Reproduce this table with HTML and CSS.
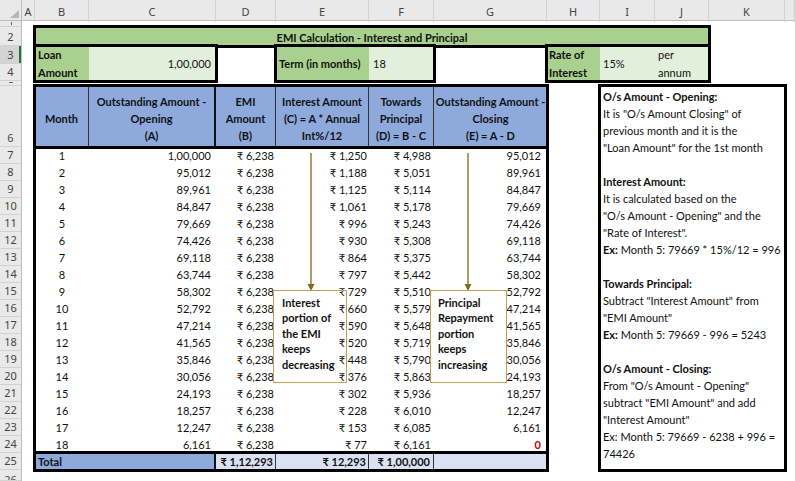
FILE: index.html
```html
<!DOCTYPE html>
<html lang="en">
<head>
<meta charset="utf-8">
<title>EMI Calculation - Interest and Principal</title>
<link rel="stylesheet" href="styles.css">
</head>
<body>
<div class="app">
  <div class="colhdr">
    <div class="corner">
      <svg class="corner-tri" width="22" height="21" viewBox="0 0 22 21"><polygon points="19,10 19,18 10,18" fill="#b5b5b5"/></svg>
    </div>
    <div class="ch">A</div>
    <div class="ch">B</div>
    <div class="ch">C</div>
    <div class="ch">D</div>
    <div class="ch">E</div>
    <div class="ch">F</div>
    <div class="ch">G</div>
    <div class="ch">H</div>
    <div class="ch">I</div>
    <div class="ch">J</div>
    <div class="ch">K</div>
    <div class="ch"></div>
  </div>

  <div class="main">
    <div class="rowhdr">
      <div class="rh rh-hidden"><i class="tick tick-v"></i></div>
      <div class="rh"><span>2</span></div>
      <div class="rh rh-sel"><span>3</span></div>
      <div class="rh"><span>4</span></div>
      <div class="rh rh-hidden"><i class="tick tick-h"></i></div>
      <div class="rh"><span>6</span></div>
      <div class="rh"><span>7</span></div>
      <div class="rh"><span>8</span></div>
      <div class="rh"><span>9</span></div>
      <div class="rh"><span>10</span></div>
      <div class="rh"><span>11</span></div>
      <div class="rh"><span>12</span></div>
      <div class="rh"><span>13</span></div>
      <div class="rh"><span>14</span></div>
      <div class="rh"><span>15</span></div>
      <div class="rh"><span>16</span></div>
      <div class="rh"><span>17</span></div>
      <div class="rh"><span>18</span></div>
      <div class="rh"><span>19</span></div>
      <div class="rh"><span>20</span></div>
      <div class="rh"><span>21</span></div>
      <div class="rh"><span>22</span></div>
      <div class="rh"><span>23</span></div>
      <div class="rh"><span>24</span></div>
      <div class="rh"><span>25</span></div>
      <div class="rh rh-top"><span>26</span></div>
    </div>

    <div class="canvas">
      <div class="title">EMI Calculation - Interest and Principal</div>

      <div class="box box-loan">
        <div class="lbl lbl-loan">Loan<br>Amount</div>
        <div class="val val-loan">1,00,000</div>
      </div>

      <div class="box box-term">
        <div class="lbl lbl-term">Term (in months)</div>
        <div class="val val-term">18</div>
      </div>

      <div class="box box-rate">
        <div class="lbl lbl-rate">Rate of<br>Interest</div>
        <div class="val val-rate">15%</div>
        <div class="val val-per">per<br>annum</div>
      </div>

      <div class="tbl">
        <div class="thead">
          <div class="th"><span>Month</span></div>
          <div class="th th-thick"><span>Outstanding Amount -<br>Opening<br>(A)</span></div>
          <div class="th"><span>EMI<br>Amount<br>(B)</span></div>
          <div class="th"><span>Interest Amount<br>(C) = A * Annual<br>Int%/12</span></div>
          <div class="th"><span>Towards<br>Principal<br>(D) = B - C</span></div>
          <div class="th th-last"><span>Outstanding Amount -<br>Closing<br>(E) = A - D</span></div>
        </div>

        <div class="tr"><div>1</div><div>1,00,000</div><div>₹ 6,238</div><div>₹ 1,250</div><div>₹ 4,988</div><div>95,012</div></div>
        <div class="tr"><div>2</div><div>95,012</div><div>₹ 6,238</div><div>₹ 1,188</div><div>₹ 5,051</div><div>89,961</div></div>
        <div class="tr"><div>3</div><div>89,961</div><div>₹ 6,238</div><div>₹ 1,125</div><div>₹ 5,114</div><div>84,847</div></div>
        <div class="tr"><div>4</div><div>84,847</div><div>₹ 6,238</div><div>₹ 1,061</div><div>₹ 5,178</div><div>79,669</div></div>
        <div class="tr"><div>5</div><div>79,669</div><div>₹ 6,238</div><div>₹ 996</div><div>₹ 5,243</div><div>74,426</div></div>
        <div class="tr"><div>6</div><div>74,426</div><div>₹ 6,238</div><div>₹ 930</div><div>₹ 5,308</div><div>69,118</div></div>
        <div class="tr"><div>7</div><div>69,118</div><div>₹ 6,238</div><div>₹ 864</div><div>₹ 5,375</div><div>63,744</div></div>
        <div class="tr"><div>8</div><div>63,744</div><div>₹ 6,238</div><div>₹ 797</div><div>₹ 5,442</div><div>58,302</div></div>
        <div class="tr"><div>9</div><div>58,302</div><div>₹ 6,238</div><div>₹ 729</div><div>₹ 5,510</div><div>52,792</div></div>
        <div class="tr"><div>10</div><div>52,792</div><div>₹ 6,238</div><div>₹ 660</div><div>₹ 5,579</div><div>47,214</div></div>
        <div class="tr"><div>11</div><div>47,214</div><div>₹ 6,238</div><div>₹ 590</div><div>₹ 5,648</div><div>41,565</div></div>
        <div class="tr"><div>12</div><div>41,565</div><div>₹ 6,238</div><div>₹ 520</div><div>₹ 5,719</div><div>35,846</div></div>
        <div class="tr"><div>13</div><div>35,846</div><div>₹ 6,238</div><div>₹ 448</div><div>₹ 5,790</div><div>30,056</div></div>
        <div class="tr"><div>14</div><div>30,056</div><div>₹ 6,238</div><div>₹ 376</div><div>₹ 5,863</div><div>24,193</div></div>
        <div class="tr"><div>15</div><div>24,193</div><div>₹ 6,238</div><div>₹ 302</div><div>₹ 5,936</div><div>18,257</div></div>
        <div class="tr"><div>16</div><div>18,257</div><div>₹ 6,238</div><div>₹ 228</div><div>₹ 6,010</div><div>12,247</div></div>
        <div class="tr"><div>17</div><div>12,247</div><div>₹ 6,238</div><div>₹ 153</div><div>₹ 6,085</div><div>6,161</div></div>
        <div class="tr"><div>18</div><div>6,161</div><div>₹ 6,238</div><div>₹ 77</div><div>₹ 6,161</div><div class="zero">0</div></div>

        <div class="ttot">
          <div class="tot-lbl">Total</div>
          <div class="tot-val tot-d">₹ 1,12,293</div>
          <div class="tot-val tot-e">₹ 12,293</div>
          <div class="tot-val tot-f">₹ 1,00,000</div>
          <div class="tot-val tot-g"></div>
        </div>

        <svg class="arrow arrow-1" width="10" height="138" viewBox="0 0 10 138"><line x1="5" y1="0" x2="5" y2="132" stroke="#7f6a1e" stroke-width="1.3"/><polygon points="1.5,131 8.5,131 5,138" fill="#7f6a1e"/></svg>
        <div class="callout callout-1">Interest<br>portion of<br>the EMI<br>keeps<br>decreasing</div>

        <svg class="arrow arrow-2" width="10" height="138" viewBox="0 0 10 138"><line x1="5" y1="0" x2="5" y2="132" stroke="#7f6a1e" stroke-width="1.3"/><polygon points="1.5,131 8.5,131 5,138" fill="#7f6a1e"/></svg>
        <div class="callout callout-2">Principal<br>Repayment<br>portion<br>keeps<br>increasing</div>
      </div>

      <div class="notes">
        <b>O/s Amount - Opening:</b><br>
        It is "O/s Amount Closing" of<br>
        previous month and it is the<br>
        "Loan Amount" for the 1st month<br>
        <br>
        <b>Interest Amount:</b><br>
        It is calculated based on the<br>
        "O/s Amount - Opening" and the<br>
        "Rate of Interest".<br>
        <b>Ex:</b> Month 5: 79669 * 15%/12 = 996<br>
        <br>
        <b>Towards Principal:</b><br>
        Subtract "Interest Amount" from<br>
        "EMI Amount"<br>
        <b>Ex:</b> Month 5: 79669 - 996 = 5243<br>
        <br>
        <b>O/s Amount - Closing:</b><br>
        From "O/s Amount - Opening"<br>
        subtract "EMI Amount" and add<br>
        "Interest Amount"<br>
        Ex: Month 5: 79669 - 6238 + 996 =<br>
        74426
      </div>
    </div>
  </div>
</div>
</body>
</html>
```

FILE: styles.css
```css
* { box-sizing: border-box; margin: 0; padding: 0; }

html, body {
  width: 795px;
  height: 481px;
  overflow: hidden;
  background: #ffffff;
}

body {
  font-family: Lato, "Noto Sans", "DejaVu Sans", sans-serif;
  font-size: 11px;
  color: #111111;
}

.app {
  width: 795px;
  height: 481px;
  display: flex;
  flex-direction: column;
}

/* ---------- column header bar ---------- */
.colhdr {
  height: 21px;
  flex: 0 0 21px;
  display: grid;
  grid-template-columns: 22px 13px 54px 127px 60px 93px 65px 113px 53px 55px 54px 76px 1fr;
  background: #e9e9e9;
  border-bottom: 1px solid #bdbdbd;
}

.corner {
  border-right: 1px solid #bdbdbd;
}

.corner-tri { display: block; }

.ch {
  font-family: "Noto Sans", "DejaVu Sans", sans-serif;
  font-size: 11px;
  color: #444444;
  text-align: center;
  line-height: 21px;
  padding-top: 1px;
  border-right: 1px solid #d2d2d2;
}

/* ---------- body ---------- */
.main {
  flex: 1;
  display: flex;
  overflow: hidden;
}

.rowhdr {
  width: 22px;
  flex: 0 0 22px;
  display: grid;
  grid-template-rows: 6px 19px 17.5px 17.5px 5px 61px repeat(19, 17px) 1fr;
  background: #e9e9e9;
  border-right: 1px solid #bdbdbd;
}

.rh {
  font-family: "Noto Sans", "DejaVu Sans", sans-serif;
  font-size: 11px;
  color: #444444;
  border-bottom: 1px solid #d2d2d2;
  display: flex;
  align-items: flex-end;
  justify-content: center;
  overflow: hidden;
}

.rh span {
  display: block;
  line-height: 17px;
  padding-top: 1px;
}

.rh-hidden {
  align-items: flex-start;
  justify-content: flex-start;
}

.tick {
  display: block;
  background: #666666;
}

.tick-v { width: 1px; height: 3px; margin: 1px 0 0 11px; }
.tick-h { width: 4px; height: 1px; margin: 1px 0 0 9px; }

.rh-sel {
  background: #d4d4d4;
  box-shadow: inset -2px 0 0 #217346;
}

.rh-top { align-items: flex-start; }

.canvas {
  flex: 1;
  display: grid;
  grid-template-columns: 13px 54px 127px 60px 93px 65px 113px 53px 55px 54px 76px 1fr;
  grid-template-rows: 6px 19px 17.5px 17.5px 5px 61px repeat(19, 17px) 1fr;
}

/* ---------- title & input boxes ---------- */
.title {
  grid-column: 2 / 11;
  grid-row: 2;
  background: #a9d08e;
  font-weight: bold;
  text-align: center;
  line-height: 19px;
  padding-top: 1px;
  outline: 3px solid #000;
  outline-offset: -1.5px;
}

.box {
  grid-row: 3 / 5;
  display: flex;
  outline: 3px solid #000;
  outline-offset: -1.5px;
}

.box-loan { grid-column: 2 / 4; }
.box-term { grid-column: 5 / 7; }
.box-rate { grid-column: 8 / 11; }

.lbl {
  background: #a9d08e;
  font-weight: bold;
  line-height: 17.5px;
  padding-left: 3px;
  white-space: nowrap;
  display: flex;
  align-items: center;
}

.val {
  background: #e2efda;
  line-height: 17.5px;
  white-space: nowrap;
  display: flex;
  align-items: center;
}

.lbl-loan { width: 54px; }
.val-loan { width: 127px; justify-content: flex-end; padding-right: 5px; }
.lbl-term { width: 93px; }
.val-term { width: 65px; padding-left: 4px; }
.lbl-rate { width: 53px; padding-left: 2px; }
.val-rate { width: 55px; padding-left: 3px; }
.val-per { width: 54px; padding-left: 3px; }

/* ---------- main table ---------- */
.tbl {
  grid-column: 2 / 8;
  grid-row: 6 / 26;
  display: flex;
  flex-direction: column;
  position: relative;
  outline: 3px solid #000;
  outline-offset: -1.5px;
}

.thead, .tr, .ttot {
  display: grid;
  grid-template-columns: 54px 127px 60px 93px 65px 113px;
}

.thead {
  height: 61px;
  flex: 0 0 61px;
  background: #8ea9db;
  outline: 3px solid #000;
  outline-offset: -1.5px;
}

.th {
  display: flex;
  align-items: center;
  justify-content: center;
  text-align: center;
  font-weight: bold;
  line-height: 17px;
  padding-top: 3px;
  white-space: nowrap;
  overflow: hidden;
  border-right: 1px solid #333333;
}

.th-thick { border-right-width: 2px; border-right-color: #111111; }
.th-last { border-right: none; }

.tr {
  height: 17px;
  flex: 0 0 17px;
  line-height: 17px;
  white-space: nowrap;
}

.tr > div:nth-child(1) { text-align: center; }
.tr > div:nth-child(2) { text-align: right; padding-right: 5px; }
.tr > div:nth-child(3) { text-align: right; padding-right: 2px; }
.tr > div:nth-child(4) { text-align: right; padding-right: 2px; }
.tr > div:nth-child(5) { text-align: right; padding-right: 3px; }
.tr > div:nth-child(6) { text-align: right; padding-right: 6px; }

.tr > .zero { color: #c00000; font-weight: bold; }

.ttot {
  height: 17px;
  flex: 0 0 17px;
  line-height: 17px;
  font-weight: bold;
  white-space: nowrap;
  outline: 3px solid #000;
  outline-offset: -1.5px;
}

.tot-lbl {
  grid-column: span 2;
  background: #8ea9db;
  padding-left: 3px;
  border-right: 2px solid #111111;
}

.tot-val {
  background: #d9e1f2;
  text-align: right;
}

.tot-d { padding-right: 2px; border-right: 1px solid #333333; }
.tot-e { padding-right: 2px; border-right: 1px solid #333333; }
.tot-f { padding-right: 3px; border-right: 1px solid #333333; }

/* ---------- callouts (overlays) ---------- */
.arrow {
  position: absolute;
  top: 67px;
  display: block;
}

.arrow-1 { left: 271px; }
.arrow-2 { left: 428px; }

.callout {
  position: absolute;
  top: 204px;
  height: 93px;
  border: 1px solid #bf9f55;
  font-weight: bold;
  line-height: 15.4px;
  padding: 4px 0 0 8px;
  white-space: nowrap;
}

.callout-1 { left: 238px; width: 74px; }
.callout-2 { left: 395px; width: 77px; padding-left: 7px; }

/* ---------- notes box ---------- */
.notes {
  grid-column: 9 / 12;
  grid-row: 6 / 26;
  outline: 3px solid #000;
  outline-offset: -1.5px;
  line-height: 17px;
  padding: 2px 0 0 3px;
  white-space: nowrap;
}
```
